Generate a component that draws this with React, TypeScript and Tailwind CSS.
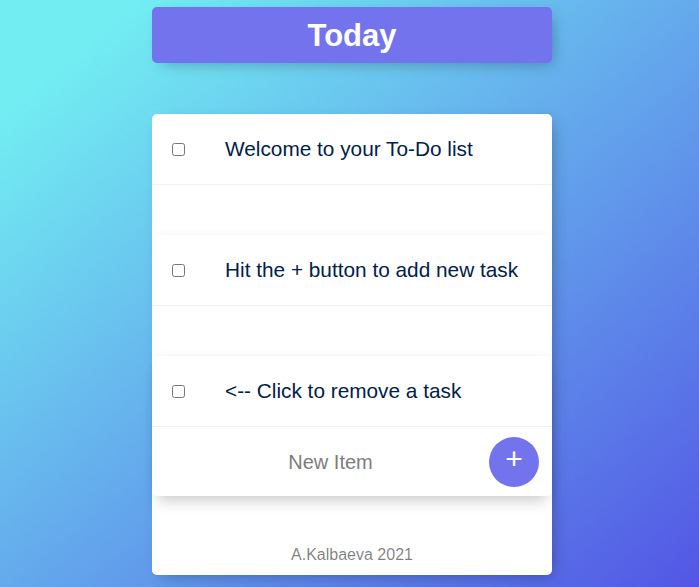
import React from "react";

const items = [
  "Welcome to your To-Do list",
  "Hit the + button to add new task",
  "<-- Click to remove a task",
];

function Row({ text, border = true }: { text: string; border?: boolean }) {
  return (
    <div
      className={
        "flex h-[71px] items-center " + (border ? "border-b border-[#F1F1F1]" : "")
      }
    >
      <input type="checkbox" className="m-5 h-[13px] w-[13px]" />
      <p className="p-5 text-[20.8px] font-normal leading-[24px] text-[#00204a]">{text}</p>
    </div>
  );
}

export default function App() {
  return (
    <div className="min-h-screen w-full bg-[linear-gradient(to_right_bottom,#72EDF2_10%,#5356E5_100%)] pl-[5px] pt-[7px] font-['Liberation_Sans',Arial,sans-serif]">
      <div className="mx-auto w-[400px]">
        <div className="flex h-[56px] items-center justify-center rounded-[5px] bg-[#7473EE] shadow-[5px_5px_15px_-5px_rgba(0,0,0,0.3)]">
          <h1 className="text-[31px] font-bold leading-none text-white">Today</h1>
        </div>

        <div className="mt-[51px] rounded-[5px] bg-white shadow-[5px_5px_15px_-5px_rgba(0,0,0,0.3)]">
          <Row text={items[0]} />
          <div className="h-[50px]" />
          <div className="rounded-[5px] bg-white shadow-[0_-4px_8px_-4px_rgba(0,0,0,0.06)]">
            <Row text={items[1]} />
          </div>
          <div className="h-[50px]" />
          <div className="rounded-[5px] bg-white shadow-[0_-4px_8px_-4px_rgba(0,0,0,0.06),0_10px_14px_-6px_rgba(0,0,0,0.22)]">
            <Row text={items[2]} />
            <div className="flex h-[69px] items-center pl-5">
              <input
                type="text"
                placeholder="New Item"
                className="h-[60px] w-[313px] bg-transparent pl-1 pt-[2px] text-center text-[20px] text-[#00204a] outline-none placeholder:text-[#7d7d7d]"
              />
              <button className="ml-[4px] flex h-[50px] w-[50px] items-center justify-center rounded-full bg-[#7473EE] pb-[6px] text-[30px] leading-none text-white">
                +
              </button>
            </div>
          </div>
          <footer className="pb-[8px] pt-[47px] text-center text-[16px] leading-6 text-[rgba(0,0,0,0.5)]">
            A.Kalbaeva 2021
          </footer>
        </div>
      </div>
    </div>
  );
}
